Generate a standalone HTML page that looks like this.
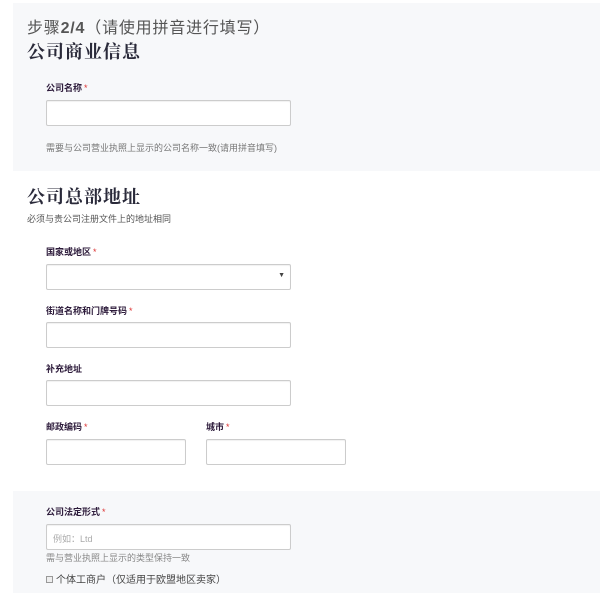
<!DOCTYPE html>
<html><head><meta charset="utf-8"><style>
*{margin:0;padding:0;box-sizing:border-box}
body{width:600px;height:593px;background:#fff;position:relative;overflow:hidden;font-family:"Liberation Sans","Noto Sans CJK SC",sans-serif;color:#333}
.p{position:absolute;background:#f7f8fa}
.t{position:absolute;white-space:nowrap}
.h{font-family:"Liberation Serif","Noto Serif CJK SC",serif;font-weight:bold;font-size:18px;color:#2a2a3a;letter-spacing:1px}
.l{font-size:9px;font-weight:bold;color:#2c1a3a}
.l i{color:#d33;font-style:normal;font-weight:normal;margin-left:2px}
.s{font-size:9px;color:#777}
.in{position:absolute;background:#fff;border:1px solid #ccc;border-radius:2px;box-shadow:inset 0 1px 1px rgba(0,0,0,.06)}
</style></head><body>
<div class="p" style="left:13px;top:3px;width:587px;height:168px"></div>
<div class="p" style="left:13px;top:491px;width:587px;height:102px"></div>
<div class="t" style="left:27px;top:14px;font-size:16px;color:#555;letter-spacing:0.8px">步骤<b>2/4</b>（请使用拼音进行填写）</div>
<div class="t h" style="left:27px;top:38px">公司商业信息</div>
<div class="t l" style="left:46px;top:81px">公司名称<i>*</i></div>
<div class="in" style="left:46px;top:100px;width:245px;height:26px"></div>
<div class="t s" style="left:46px;top:141px">需要与公司营业执照上显示的公司名称一致(请用拼音填写)</div>
<div class="t h" style="left:27px;top:183px">公司总部地址</div>
<div class="t s" style="left:27px;top:212px;color:#555">必须与贵公司注册文件上的地址相同</div>
<div class="t l" style="left:46px;top:245px">国家或地区<i>*</i></div>
<div class="in" style="left:46px;top:264px;width:245px;height:26px"><span style="position:absolute;right:5px;top:7px;font-size:7px;color:#444">▼</span></div>
<div class="t l" style="left:46px;top:304px">街道名称和门牌号码<i>*</i></div>
<div class="in" style="left:46px;top:322px;width:245px;height:26px"></div>
<div class="t l" style="left:46px;top:362px">补充地址</div>
<div class="in" style="left:46px;top:380px;width:245px;height:26px"></div>
<div class="t l" style="left:46px;top:420px">邮政编码<i>*</i></div>
<div class="t l" style="left:206px;top:420px">城市<i>*</i></div>
<div class="in" style="left:46px;top:439px;width:140px;height:26px"></div>
<div class="in" style="left:206px;top:439px;width:140px;height:26px"></div>
<div class="t l" style="left:46px;top:505px">公司法定形式<i>*</i></div>
<div class="in" style="left:46px;top:524px;width:245px;height:26px"><span style="position:absolute;left:6px;top:7px;font-size:9px;color:#aaa">例如：Ltd</span></div>
<div class="t s" style="left:46px;top:551px;color:#888">需与营业执照上显示的类型保持一致</div>
<div class="t" style="left:46px;top:571px;font-size:10px;color:#444"><span style="display:inline-block;width:7px;height:7px;border:1px solid #999;background:#eee;vertical-align:0;margin-right:3px"></span>个体工商户（仅适用于欧盟地区卖家）</div>
</body></html>
